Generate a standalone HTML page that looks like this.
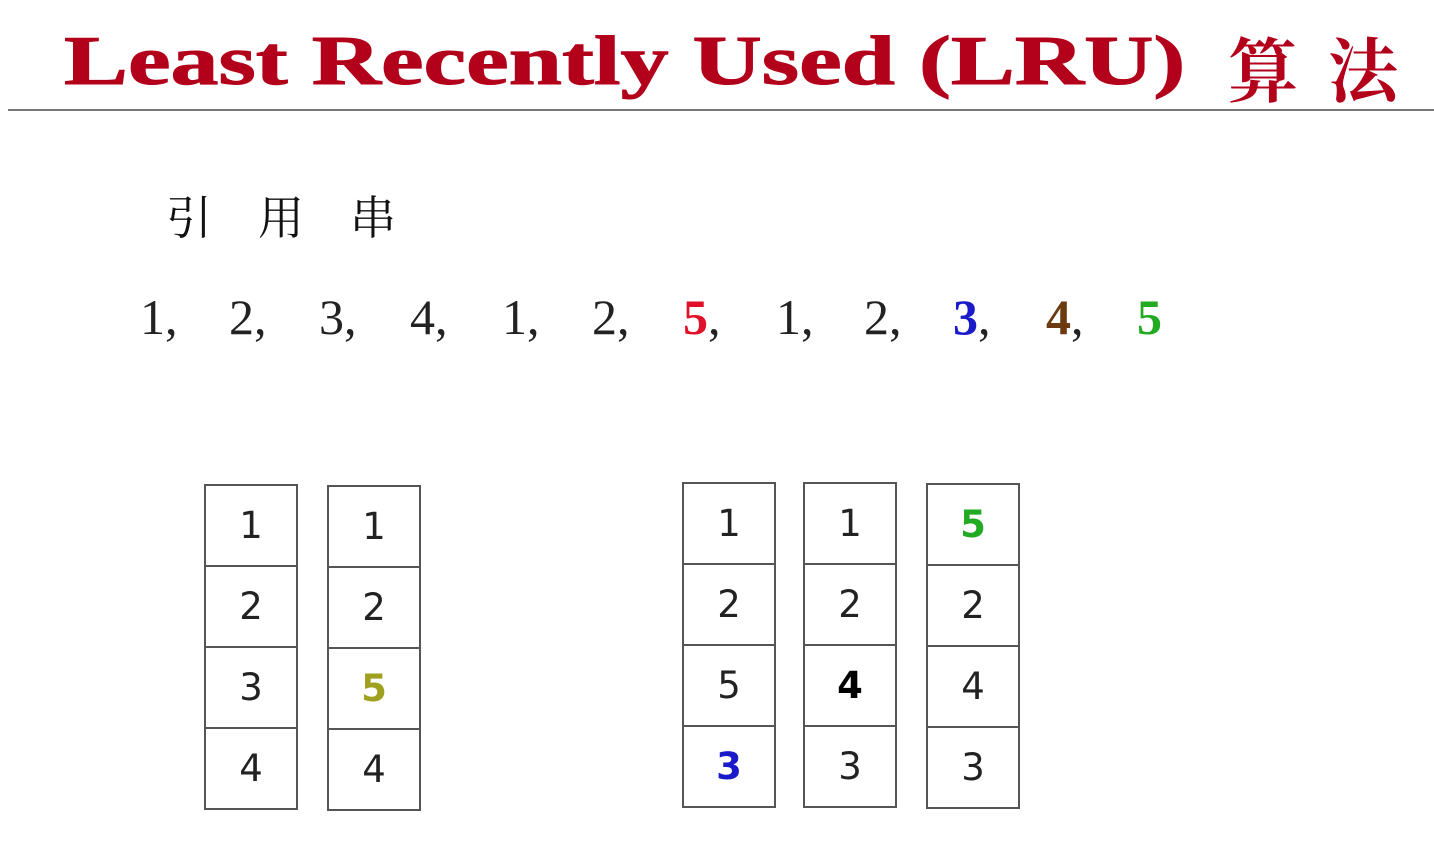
<!DOCTYPE html>
<html><head><meta charset="utf-8"><style>
body{margin:0;width:1434px;height:842px;background:#fff;position:relative;overflow:hidden}
.t{position:absolute;left:64px;top:22px;font:bold 70px "Liberation Serif",serif;color:#b3001b;white-space:nowrap;transform:scaleX(1.37);transform-origin:0 0;-webkit-text-stroke:1px #b3001b}
.t2{position:absolute;left:1228px;top:16px;font:bold 70px "Noto Serif CJK SC",serif;color:#b3001b;letter-spacing:30px;white-space:nowrap}
.line{position:absolute;left:8px;top:109px;width:1426px;height:2px;background:#777}
.cn{position:absolute;left:166px;top:182px;font:46px "Liberation Serif","Noto Serif CJK SC",serif;letter-spacing:46px;color:#111;white-space:nowrap}
.seq span{position:absolute;top:288px;font:50px "Liberation Serif",serif;color:#222}
.col{position:absolute;width:90px;border:2px solid #555;border-bottom:none}
.col div{height:79px;border-bottom:2px solid #555;text-align:center;font:37px "DejaVu Sans",sans-serif;line-height:79px;color:#222}
</style></head><body>
<div class="t">Least Recently Used (LRU)</div>
<div class="t2">算法</div>
<div class="line"></div>
<div class="cn">引用串</div>
<div class="seq">
<span style="left:140px">1,</span><span style="left:229px">2,</span><span style="left:319px">3,</span><span style="left:410px">4,</span><span style="left:502px">1,</span><span style="left:592px">2,</span><span style="left:683px;color:#e0102a;font-weight:bold">5</span><span style="left:708px">,</span><span style="left:776px">1,</span><span style="left:864px">2,</span><span style="left:953px;color:#1a1ac8;font-weight:bold">3</span><span style="left:978px">,</span><span style="left:1046px;color:#6b3a0e;font-weight:bold">4</span><span style="left:1071px">,</span><span style="left:1137px;color:#22aa22;font-weight:bold">5</span>
</div>
<div class="col" style="left:204px;top:484px"><div>1</div><div>2</div><div>3</div><div>4</div></div>
<div class="col" style="left:327px;top:485px"><div>1</div><div>2</div><div style="color:#a0a020;font-weight:bold">5</div><div>4</div></div>
<div class="col" style="left:682px;top:482px"><div>1</div><div>2</div><div>5</div><div style="color:#1a1ac8;font-weight:bold">3</div></div>
<div class="col" style="left:803px;top:482px"><div>1</div><div>2</div><div style="color:#000;font-weight:bold">4</div><div>3</div></div>
<div class="col" style="left:926px;top:483px"><div style="color:#22aa22;font-weight:bold">5</div><div>2</div><div>4</div><div>3</div></div>
</body></html>
